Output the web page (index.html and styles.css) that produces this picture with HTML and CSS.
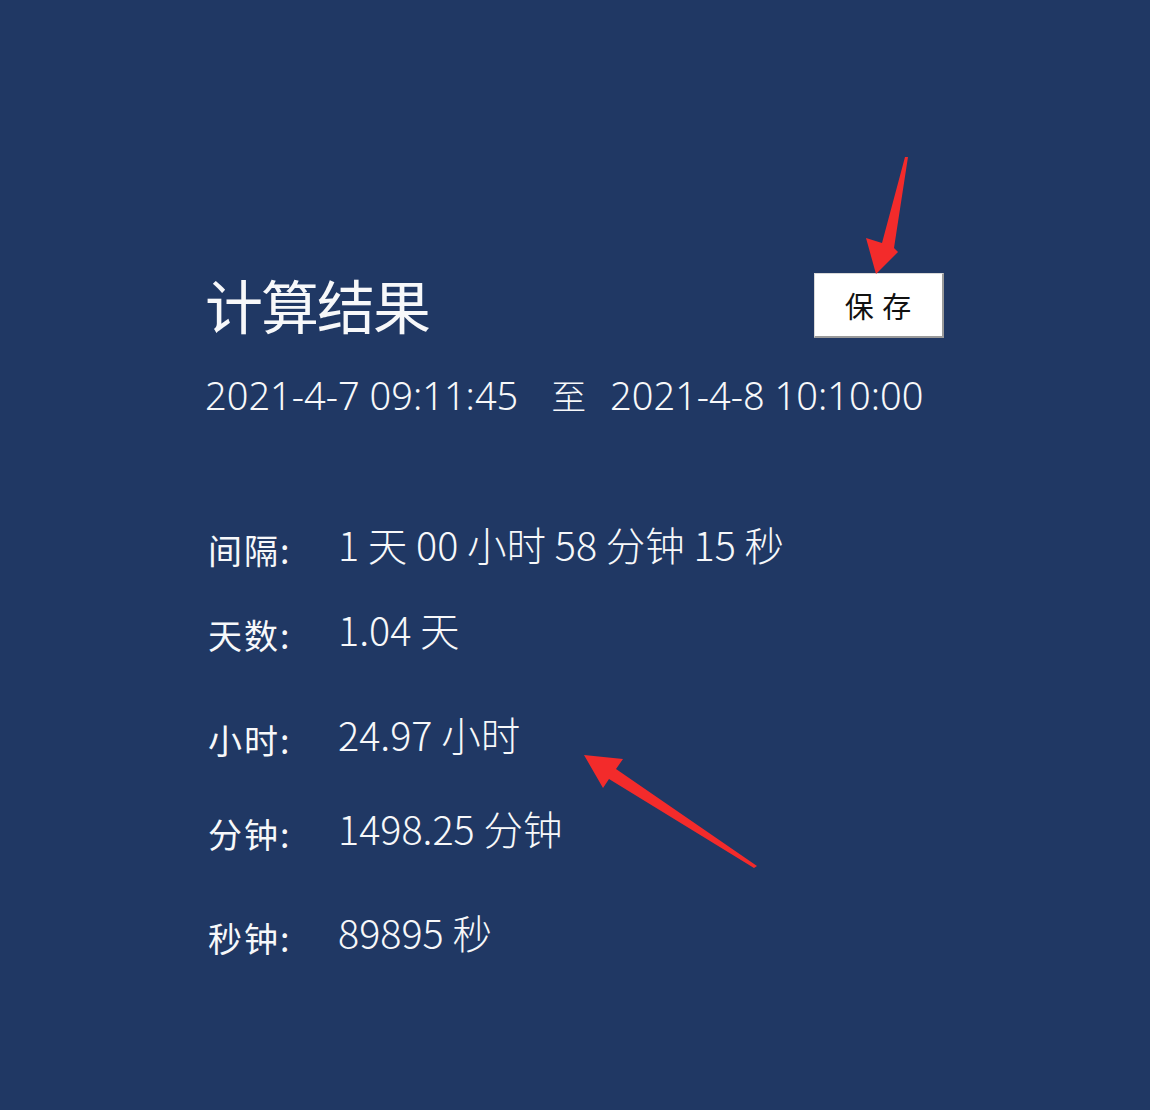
FILE: index.html
```html
<!DOCTYPE html>
<html lang="zh-CN">
<head>
<meta charset="utf-8">
<title>计算结果</title>
<link rel="stylesheet" href="styles.css">
</head>
<body>
<div class="page">
  <div class="panel">
    <div class="head">
      <h1 class="title">计算结果</h1>
      <button class="save">保 存</button>
    </div>
    <div class="range">
      <span class="dt">2021-4-7 09:11:45</span>
      <span class="to">至</span>
      <span class="dt">2021-4-8 10:10:00</span>
    </div>
    <div class="rows">
      <div class="row r1"><span class="label">间隔:</span><span class="value">1 天 00 小时 58 分钟 15 秒</span></div>
      <div class="row r2"><span class="label">天数:</span><span class="value">1.04 天</span></div>
      <div class="row r3"><span class="label">小时:</span><span class="value">24.97 小时</span></div>
      <div class="row r4"><span class="label">分钟:</span><span class="value">1498.25 分钟</span></div>
      <div class="row r5"><span class="label">秒钟:</span><span class="value">89895 秒</span></div>
    </div>
  </div>
  <svg class="annot" width="1150" height="1110" viewBox="0 0 1150 1110" aria-hidden="true">
    <polygon class="arrow" points="908,157 894,248 898,252 876,274 866,238 882,243 905,157"/>
    <polygon class="arrow" points="584,755 623,759 616,769 757,866 754,868 609,779 603,788"/>
  </svg>
</div>
</body>
</html>
```

FILE: styles.css
```css
html, body {
  margin: 0;
  padding: 0;
}
body {
  background: #203864;
  font-family: "Noto Sans", "Noto Sans CJK SC", sans-serif;
  color: #f7f8fa;
}
.page {
  position: relative;
  width: 1150px;
  height: 1110px;
  overflow: hidden;
}
.panel {
  padding: 273px 0 0 205px;
  width: 739px;
}
.head {
  display: flex;
  justify-content: space-between;
  align-items: flex-start;
  height: 65px;
}
.title {
  margin: 0;
  font-family: "Noto Sans CJK SC", sans-serif;
  font-weight: 400;
  font-size: 58px;
  line-height: 62px;
  letter-spacing: -2px;
}
.save {
  width: 130px;
  height: 65px;
  background: #ffffff;
  border: 1px solid #d8d8d8;
  border-right: 2px solid #9a9a9a;
  border-bottom: 2px solid #9a9a9a;
  font-family: "Noto Sans CJK SC", sans-serif;
  font-size: 29px;
  letter-spacing: 1px;
  color: #111;
  padding: 0;
  margin: 0;
  line-height: 1;
}
.range {
  margin-top: 32px;
  font-size: 38px;
  font-weight: 300;
  line-height: 50px;
  white-space: nowrap;
}
.to {
  font-family: "Noto Sans CJK SC", sans-serif;
  font-size: 35px;
  margin: 0 14px 0 23px;
}
.rows {
  display: flex;
  flex-direction: column;
}
.row {
  display: flex;
  align-items: center;
  height: 50px;
  white-space: nowrap;
}
.r1 { margin-top: 98px; }
.r2 { margin-top: 35px; }
.r3 { margin-top: 55px; }
.r4 { margin-top: 44px; }
.r5 { margin-top: 54px; }
.label {
  width: 133px;
  font-family: "Noto Sans CJK SC", sans-serif;
  font-size: 34px;
  letter-spacing: 2px;
  position: relative;
  top: 6px;
  left: 3px;
}
.value {
  font-family: "Noto Sans CJK SC", sans-serif;
  font-size: 39.5px;
  font-weight: 300;
}
.annot {
  position: absolute;
  left: 0;
  top: 0;
  pointer-events: none;
}
.arrow {
  fill: #f32b2b;
}
```
